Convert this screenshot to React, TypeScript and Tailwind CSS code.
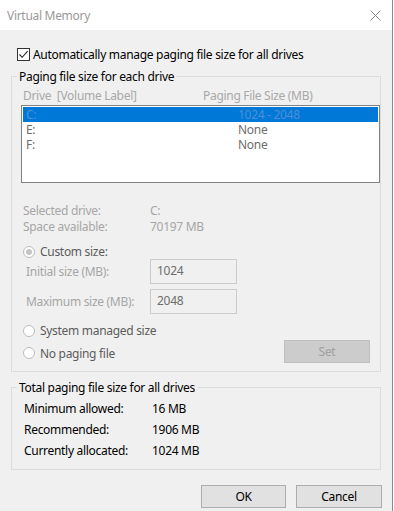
const font = { fontFamily: '"Noto Sans", "Liberation Sans", sans-serif' };

function Radio({ checked, label, className = '' }: { checked?: boolean; label: string; className?: string }) {
  return (
    <div className={`flex items-center h-[15px] ${className}`}>
      <span className="w-[12px] h-[12px] rounded-full border border-[#bcbcbc] bg-white flex items-center justify-center shrink-0">
        {checked && <span className="w-[6px] h-[6px] rounded-full bg-[#c4c4c4]" />}
      </span>
      <span className="ml-[5px] text-[#5c5c5c]">{label}</span>
    </div>
  );
}

function SizeField({ label, value, className = '' }: { label: string; value: string; className?: string }) {
  return (
    <div className={`flex items-center ${className}`}>
      <span className="w-[127px] pl-[3px] text-[#a6a6a6]">{label}</span>
      <div className="w-[87px] h-[25px] border border-[#cccccc] bg-[#f0f0f0] pl-[6px] pt-[2px] leading-[18px] text-[#6d6d6d]">
        {value}
      </div>
    </div>
  );
}

function Totals({ label, value }: { label: string; value: string }) {
  return (
    <div className="flex h-[21px] leading-[21px] text-black">
      <span className="w-[128px]">{label}</span>
      <span>{value}</span>
    </div>
  );
}

export default function App() {
  return (
    <div style={font} className="w-[394px] h-[511px] bg-white text-[12px] leading-[15px] tracking-[-0.3px] overflow-hidden">
      <div className="w-[393px] h-[511px] bg-[#f0f0f0] border-r border-[#8c8c8c] flex flex-col">
        <div className="h-[30px] bg-white flex items-center justify-between pl-[7px] pr-[11px] shrink-0">
          <span className="text-[#999999] text-[12px]">Virtual Memory</span>
          <svg width="11" height="11" viewBox="0 0 11 11" className="block">
            <path d="M0.5 0.5L10.5 10.5M10.5 0.5L0.5 10.5" stroke="#8a8a8a" strokeWidth="1" />
          </svg>
        </div>

        <div className="flex items-center ml-[17px] mt-[17px] h-[15px]">
          <span className="w-[13px] h-[13px] border border-[#333333] bg-white flex items-center justify-center">
            <svg width="11" height="11" viewBox="0 0 11 11">
              <path d="M1.5 5.5L4.2 8.3L9.6 2.2" fill="none" stroke="#222222" strokeWidth="1.1" />
            </svg>
          </span>
          <span className="ml-[3px] text-black">Automatically manage paging file size for all drives</span>
        </div>

        <div className="ml-[11px] mt-[14px] w-[370px] h-[296px] border border-[#dcdcdc] flex flex-col">
          <span className="-mt-[8px] ml-[5px] px-[2px] bg-[#f0f0f0] w-fit text-black">Paging file size for each drive</span>

          <div className="flex mt-[4px] text-[#a8a8a8]">
            <span className="w-[191px] pl-[11px]">Drive&nbsp; [Volume Label]</span>
            <span>Paging File Size (MB)</span>
          </div>

          <div className="ml-[9px] mt-[2px] w-[359px] h-[78px] border border-[#828282] bg-white p-[1px] text-[#6d6d6d]">
            <div className="flex h-[15px] bg-[#0078d7] text-[#4f8fd8]">
              <span className="w-[215px] pl-[3px]">C:</span>
              <span>1024 - 2048</span>
            </div>
            <div className="flex h-[15px]">
              <span className="w-[215px] pl-[3px]">E:</span>
              <span>None</span>
            </div>
            <div className="flex h-[15px]">
              <span className="w-[215px] pl-[3px]">F:</span>
              <span>None</span>
            </div>
          </div>

          <div className="mt-[20px] pl-[11px] text-[#a6a6a6] leading-[16px]">
            <div className="flex">
              <span className="w-[127px]">Selected drive:</span>
              <span>C:</span>
            </div>
            <div className="flex">
              <span className="w-[127px]">Space available:</span>
              <span>70197 MB</span>
            </div>
          </div>

          <div className="pl-[11px]">
            <Radio checked label="Custom size:" className="mt-[9px]" />
            <SizeField label="Initial size (MB):" value="1024" />
            <SizeField label="Maximum size (MB):" value="2048" className="mt-[5px]" />
            <Radio label="System managed size" className="mt-[9px]" />
            <div className="flex items-center justify-between mt-[2px] pr-[10px]">
              <Radio label="No paging file" className="mt-[3px]" />
              <div className="w-[86px] h-[23px] bg-[#cccccc] border border-[#bfbfbf] flex items-center justify-center text-[#a0a0a0]">
                Set
              </div>
            </div>
          </div>
        </div>

        <div className="ml-[11px] mt-[15px] w-[370px] h-[83px] border border-[#dcdcdc] flex flex-col">
          <span className="-mt-[8px] ml-[5px] px-[2px] bg-[#f0f0f0] w-fit text-black">Total paging file size for all drives</span>
          <div className="pl-[12px] mt-[3px]">
            <Totals label="Minimum allowed:" value="16 MB" />
            <Totals label="Recommended:" value="1906 MB" />
            <Totals label="Currently allocated:" value="1024 MB" />
          </div>
        </div>

        <div className="flex justify-end gap-[10px] mt-[15px] pr-[10px]">
          <div className="w-[85px] h-[23px] bg-[#e1e1e1] border border-[#adadad] flex items-center justify-center text-black">OK</div>
          <div className="w-[86px] h-[23px] bg-[#e1e1e1] border border-[#adadad] flex items-center justify-center text-black">Cancel</div>
        </div>
      </div>
    </div>
  );
}
